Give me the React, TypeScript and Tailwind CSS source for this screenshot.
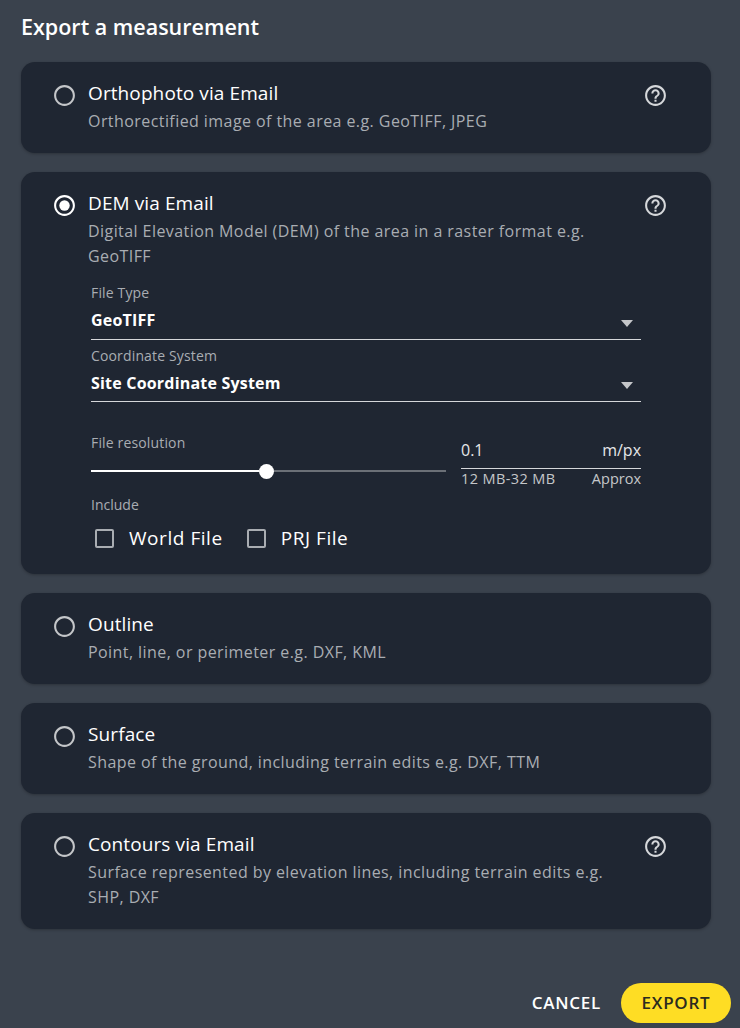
import type { ReactNode } from "react";

function Help() {
  return (
    <svg width="25" height="25" viewBox="0 0 24 24" className="shrink-0 text-[#d5d7da]" fill="currentColor">
      <path d="M11 18h2v-2h-2v2zm1-16C6.48 2 2 6.48 2 12s4.48 10 10 10 10-4.48 10-10S17.52 2 12 2zm0 18c-4.41 0-8-3.59-8-8s3.59-8 8-8 8 3.59 8 8-3.59 8-8 8zm0-14c-2.21 0-4 1.79-4 4h2c0-1.1.9-2 2-2s2 .9 2 2c0 2-3 1.75-3 5h2c0-2.25 3-2.5 3-5 0-2.21-1.79-4-4-4z" />
    </svg>
  );
}

function Radio({ on }: { on?: boolean }) {
  return (
    <svg width="25" height="25" viewBox="0 0 24 24" className={on ? "shrink-0 text-white" : "shrink-0 text-[#c4c6c9]"} fill="currentColor">
      <path d="M12 2C6.48 2 2 6.48 2 12s4.48 10 10 10 10-4.48 10-10S17.52 2 12 2zm0 18c-4.42 0-8-3.58-8-8s3.58-8 8-8 8 3.58 8 8-3.58 8-8 8z" />
      {on && <circle cx="12" cy="12" r="5" />}
    </svg>
  );
}

function Select({ label, value, short }: { label: string; value: string; short?: boolean }) {
  return (
    <div className="flex flex-col">
      <span className="text-[14px] leading-[20px] tracking-[0.15px] text-[#a9adb2]">{label}</span>
      <div className={`flex items-center justify-between ${short ? "h-[36px]" : "h-[37px]"} pb-[2px] border-b border-[#d5d7da] pr-[8px]`}>
        <span className="text-[16px] font-bold tracking-[0.2px] text-white">{value}</span>
        <span className="w-0 h-0 mt-[6px] border-x-[6.5px] border-x-transparent border-t-[7px] border-t-[#c4c6c9]" />
      </div>
    </div>
  );
}

function Check({ label }: { label: string }) {
  return (
    <div className="flex items-center gap-[15px]">
      <span className="w-[19px] h-[19px] rounded-[2px] border-2 border-[#a9adb2]" />
      <span className="text-[19px] leading-[24px] tracking-[0.55px] text-white">{label}</span>
    </div>
  );
}

function Card({ title, desc, help, children }: { title: string; desc: string; help?: boolean; children?: ReactNode }) {
  return (
    <section className="rounded-[14px] bg-[#1f2632] shadow-[0_1px_3px_rgba(0,0,0,0.25)] pl-[31px] pr-[43px] pt-[18px] pb-[19px]">
      <div className="flex items-start gap-[11px]">
        <div className="pt-[3px]">
          <Radio on={!!children} />
        </div>
        <div className="flex-1 min-w-0">
          <div className="flex justify-between">
            <h3 className="text-[19px] leading-[26px] tracking-[0.1px] text-white">{title}</h3>
            <div className="pt-[2.5px] h-[26px]">{help && <Help />}</div>
          </div>
          <p className="w-[520px] text-[16px] leading-[25px] tracking-[0.43px] text-[#a9adb2] mt-[3px]">{desc}</p>
        </div>
      </div>
      {children}
    </section>
  );
}

export default function App() {
  return (
    <div className="font-['Open_Sans',sans-serif] w-[740px] h-[1028px] bg-[#3a424d] pl-[21px] pr-[29px] pt-[13px] flex flex-col overflow-hidden">
      <h2 className="text-[21.5px] leading-[28px] font-semibold text-white mb-[21px]">Export a measurement</h2>
      <div className="flex flex-col gap-[19px]">
        <Card title="Orthophoto via Email" desc="Orthorectified image of the area e.g. GeoTIFF, JPEG" help />
        <Card title="DEM via Email" desc="Digital Elevation Model (DEM) of the area in a raster format e.g. GeoTIFF" help>
          <div className="ml-[39px] mr-[27px] mt-[14px] mb-[5px] flex flex-col">
            <Select label="File Type" value="GeoTIFF" />
            <div className="mt-[6px]">
              <Select label="Coordinate System" value="Site Coordinate System" short />
            </div>
            <div className="flex gap-[15px] mt-[31px]">
              <div className="flex-1">
                <span className="block text-[14px] leading-[20px] tracking-[0.15px] text-[#a9adb2]">File resolution</span>
                <div className="flex items-center h-[16px] mt-[10px]">
                  <div className="w-[168px] h-[2px] bg-white" />
                  <div className="w-[15px] h-[15px] rounded-full bg-white shrink-0" />
                  <div className="flex-1 h-[2px] bg-[#6b7077]" />
                </div>
              </div>
              <div className="w-[180px]">
                <div className="flex justify-between items-end h-[36px] pb-[6px] border-b border-[#d5d7da] text-[16px] leading-[24px] text-[#e6e7e9]">
                  <span>0.1</span>
                  <span>m/px</span>
                </div>
                <div className="flex justify-between text-[14.5px] leading-[20px] text-[#c4c6c9]">
                  <span className="tracking-[0.4px]">12 MB-32 MB</span>
                  <span>Approx</span>
                </div>
              </div>
            </div>
            <span className="text-[14px] leading-[20px] text-[#a9adb2] mt-[6px]">Include</span>
            <div className="flex gap-[24px] pl-[4px] mt-[11px]">
              <Check label="World File" />
              <Check label="PRJ File" />
            </div>
          </div>
        </Card>
        <Card title="Outline" desc="Point, line, or perimeter e.g. DXF, KML" />
        <Card title="Surface" desc="Shape of the ground, including terrain edits e.g. DXF, TTM" />
        <Card title="Contours via Email" desc="Surface represented by elevation lines, including terrain edits e.g. SHP, DXF" help />
      </div>
      <div className="mt-auto mb-[5px] flex justify-end items-center gap-[20px] -mr-[20px]">
        <span className="text-[17px] font-semibold tracking-[0.75px] text-white">CANCEL</span>
        <span className="h-[40px] w-[110px] rounded-full bg-[#fedd24] flex items-center justify-center text-[17px] font-semibold tracking-[0.75px] text-[#2b2b1f]">EXPORT</span>
      </div>
    </div>
  );
}
